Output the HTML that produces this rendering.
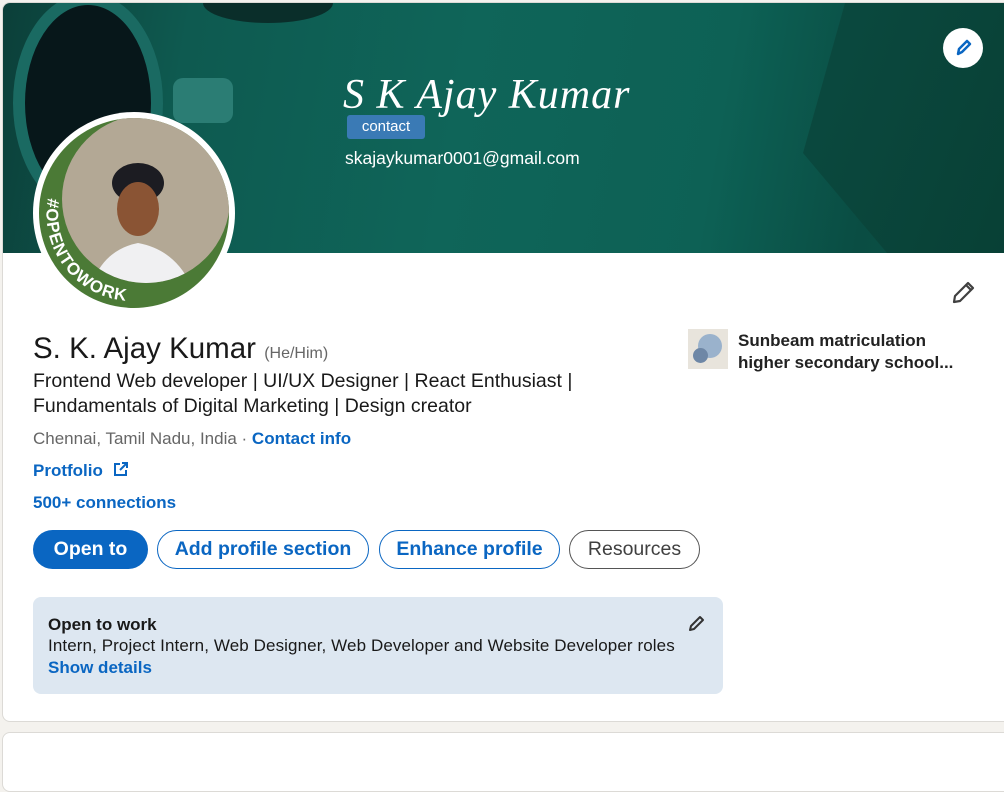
<!DOCTYPE html>
<html><head><meta charset="utf-8"><style>
*{margin:0;padding:0;box-sizing:border-box}
body{width:1004px;height:766px;background:#f4f2ee;font-family:"Liberation Sans",sans-serif;position:relative;overflow:hidden;color:#191919}
.card{position:absolute;left:2px;top:2px;width:1010px;height:720px;background:#fff;border:1px solid #dcdad6;border-radius:8px;overflow:hidden}
.card2{position:absolute;left:2px;top:732px;width:1010px;height:60px;background:#fff;border:1px solid #dcdad6;border-radius:8px}
.banner{position:absolute;left:0;top:0;width:1010px;height:250px;background:linear-gradient(100deg,#0c3f39 0%,#0e5a50 18%,#0f6559 45%,#0d6155 70%,#0a4d43 85%,#0b5246 100%)}
.abs{position:absolute}
.blue{color:#0a66c2}
.btn{position:absolute;top:527px;height:39px;border-radius:20px;font-size:19.5px;display:flex;align-items:center;justify-content:center;font-weight:bold}
</style></head><body>
<div class="card">
 <div class="banner">
  <div class="abs" style="left:10px;top:-10px;width:150px;height:220px;border-radius:50%;background:#07171a;border:12px solid #1a6a62"></div>
  <div class="abs" style="left:170px;top:75px;width:60px;height:45px;background:#2b7d74;border-radius:10px"></div>
  <div class="abs" style="left:200px;top:-20px;width:130px;height:40px;background:#0a2e2a;border-radius:50%"></div>
  <div class="abs" style="left:800px;top:0;width:210px;height:250px;background:linear-gradient(110deg,#0b4a40,#084035);clip-path:polygon(20% 0,100% 0,100% 100%,40% 100%,0 60%)"></div>
  <div class="abs" style="left:340px;top:68px;font-family:'Liberation Serif',serif;font-style:italic;font-size:42px;color:#fff;letter-spacing:1px">S K Ajay Kumar</div>
  <div class="abs" style="left:344px;top:112px;width:78px;height:24px;background:#3a7ab5;border-radius:3px;color:#fff;font-size:15px;text-align:center;line-height:24px">contact</div>
  <div class="abs" style="left:342px;top:145px;color:#fff;font-size:17.5px">skajaykumar0001@gmail.com</div>
  <div class="abs" style="left:940px;top:25px;width:40px;height:40px;border-radius:50%;background:#fff">
   <svg width="40" height="40" viewBox="0 0 40 40"><path d="M15 26 L16 21 L24 13 L27 16 L19 24 Z" fill="none" stroke="#0a66c2" stroke-width="2.5" stroke-linejoin="round"/></svg>
  </div>
 </div>
 <svg class="abs" style="left:29px;top:108px" width="204" height="204" viewBox="0 0 204 204">
  <defs><clipPath id="c"><circle cx="102" cy="102" r="95"/></clipPath>
  <clipPath id="c2"><circle cx="114" cy="88" r="84"/></clipPath>
  <path id="arc" d="M16 87 A87 87 0 0 0 169 158"/></defs>
  <circle cx="102" cy="102" r="101" fill="#fff"/>
  <g clip-path="url(#c)">
   <rect width="204" height="204" fill="#4b7a36"/>
   <g clip-path="url(#c2)">
    <rect width="204" height="204" fill="#b3a895"/>
    <ellipse cx="106" cy="72" rx="26" ry="20" fill="#1c1c22"/>
    <ellipse cx="106" cy="98" rx="21" ry="27" fill="#8a5434"/>
    <path d="M55 190 Q65 140 106 132 Q150 140 165 190 Z" fill="#f0f0f2"/>
   </g>
  </g>
  <text font-family="Liberation Sans,sans-serif" font-weight="bold" font-size="17" fill="#fff" letter-spacing="1"><textPath href="#arc">#OPENTOWORK</textPath></text>
 </svg>
 <svg class="abs" style="left:946px;top:276px" width="28" height="28" viewBox="0 0 28 28"><path d="M5 23 L6 17 L19 4 L24 9 L11 22 Z M17 6 L22 11" fill="none" stroke="#404040" stroke-width="2.2" stroke-linejoin="round"/></svg>
 <div class="abs" style="left:30px;top:329px;font-size:29.5px;color:#191919">S. K. Ajay Kumar <span style="font-size:16px;color:#666">(He/Him)</span></div>
 <div class="abs" style="left:30px;top:366px;font-size:19.5px;line-height:25px;width:640px">Frontend Web developer | UI/UX Designer | React Enthusiast |<br>Fundamentals of Digital Marketing | Design creator</div>
 <div class="abs" style="left:30px;top:426px;font-size:17px;color:#666">Chennai, Tamil Nadu, India · <b class="blue">Contact info</b></div>
 <div class="abs blue" style="left:30px;top:458px;font-size:17px;font-weight:bold">Protfolio <svg width="17" height="17" viewBox="0 0 17 17" style="vertical-align:-2px;margin-left:4px"><path d="M8 3 H3 V14 H14 V9 M10 2 H15 V7 M15 2 L8 9" fill="none" stroke="#0a66c2" stroke-width="2"/></svg></div>
 <div class="abs blue" style="left:30px;top:490px;font-size:17px;font-weight:bold">500+ connections</div>
 <div class="btn" style="left:30px;width:115px;background:#0a66c2;color:#fff">Open to</div>
 <div class="btn" style="left:154px;width:212px;border:1px solid #0a66c2;color:#0a66c2">Add profile section</div>
 <div class="btn" style="left:376px;width:181px;border:1px solid #0a66c2;color:#0a66c2">Enhance profile</div>
 <div class="btn" style="left:566px;width:131px;border:1px solid #555;color:#404040;font-weight:normal">Resources</div>
 <div class="abs" style="left:685px;top:326px;width:40px;height:40px;background:#e8e4dc">
  <div class="abs" style="left:10px;top:5px;width:24px;height:24px;border-radius:50%;background:#9ab2cc"></div>
  <div class="abs" style="left:5px;top:19px;width:15px;height:15px;border-radius:50%;background:#6e87a6"></div>
 </div>
 <div class="abs" style="left:735px;top:327px;font-size:17px;line-height:22px;font-weight:bold;color:#222">Sunbeam matriculation<br>higher secondary school...</div>
 <div class="abs" style="left:30px;top:594px;width:690px;height:97px;background:#dde7f1;border-radius:8px">
  <div class="abs" style="left:15px;top:18px;font-size:17px;font-weight:bold">Open to work</div>
  <div class="abs" style="left:15px;top:39px;font-size:17px;letter-spacing:0.1px">Intern, Project Intern, Web Designer, Web Developer and Website Developer roles</div>
  <div class="abs blue" style="left:15px;top:61px;font-size:17px;font-weight:bold">Show details</div>
  <svg class="abs" style="left:654px;top:16px" width="20" height="20" viewBox="0 0 20 20"><path d="M3 17 L4 13 L13 4 L16 7 L7 16 Z" fill="none" stroke="#333" stroke-width="2" stroke-linejoin="round"/></svg>
 </div>
</div>
<div class="card2"></div>
</body></html>
